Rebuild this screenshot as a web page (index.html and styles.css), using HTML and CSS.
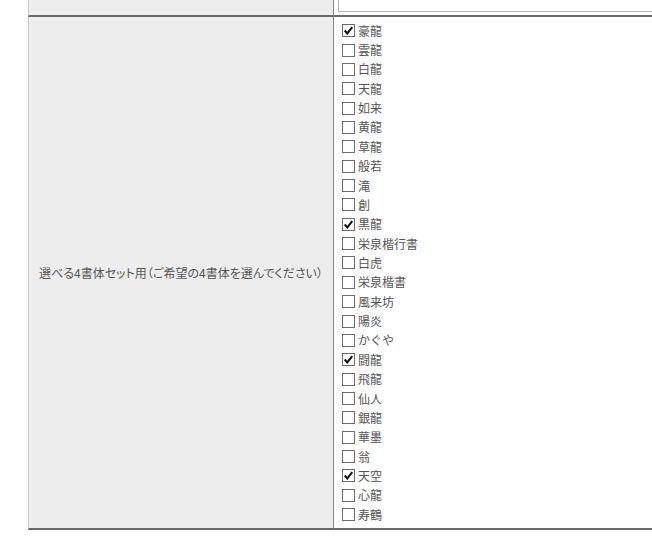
FILE: index.html
```html
<!DOCTYPE html>
<html lang="ja">
<head>
<meta charset="utf-8">
<title>書体選択</title>
<link rel="stylesheet" href="styles.css">
</head>
<body>
<div class="wrap">
<table class="form-table">
  <tr class="row-top">
    <th class="label-cell"></th>
    <td class="value-cell"><div class="text-input"></div></td>
  </tr>
  <tr>
    <th class="label-cell"><span class="label-text">選べる4書体セット用（ご希望の4書体を選んでください）</span></th>
    <td class="value-cell list-cell">
      <ul class="check-list">
        <li class="check-item"><span class="box on"><svg viewBox="0 0 13 13"><path d="M2 6.5 L5 10 L11 2.5" fill="none" stroke="#111" stroke-width="2.4"/></svg></span><span class="name">豪龍</span></li>
        <li class="check-item"><span class="box"></span><span class="name">雲龍</span></li>
        <li class="check-item"><span class="box"></span><span class="name">白龍</span></li>
        <li class="check-item"><span class="box"></span><span class="name">天龍</span></li>
        <li class="check-item"><span class="box"></span><span class="name">如来</span></li>
        <li class="check-item"><span class="box"></span><span class="name">黄龍</span></li>
        <li class="check-item"><span class="box"></span><span class="name">草龍</span></li>
        <li class="check-item"><span class="box"></span><span class="name">般若</span></li>
        <li class="check-item"><span class="box"></span><span class="name">滝</span></li>
        <li class="check-item"><span class="box"></span><span class="name">創</span></li>
        <li class="check-item"><span class="box on"><svg viewBox="0 0 13 13"><path d="M2 6.5 L5 10 L11 2.5" fill="none" stroke="#111" stroke-width="2.4"/></svg></span><span class="name">黒龍</span></li>
        <li class="check-item"><span class="box"></span><span class="name">栄泉楷行書</span></li>
        <li class="check-item"><span class="box"></span><span class="name">白虎</span></li>
        <li class="check-item"><span class="box"></span><span class="name">栄泉楷書</span></li>
        <li class="check-item"><span class="box"></span><span class="name">風来坊</span></li>
        <li class="check-item"><span class="box"></span><span class="name">陽炎</span></li>
        <li class="check-item"><span class="box"></span><span class="name">かぐや</span></li>
        <li class="check-item"><span class="box on"><svg viewBox="0 0 13 13"><path d="M2 6.5 L5 10 L11 2.5" fill="none" stroke="#111" stroke-width="2.4"/></svg></span><span class="name">闘龍</span></li>
        <li class="check-item"><span class="box"></span><span class="name">飛龍</span></li>
        <li class="check-item"><span class="box"></span><span class="name">仙人</span></li>
        <li class="check-item"><span class="box"></span><span class="name">銀龍</span></li>
        <li class="check-item"><span class="box"></span><span class="name">華墨</span></li>
        <li class="check-item"><span class="box"></span><span class="name">翁</span></li>
        <li class="check-item"><span class="box on"><svg viewBox="0 0 13 13"><path d="M2 6.5 L5 10 L11 2.5" fill="none" stroke="#111" stroke-width="2.4"/></svg></span><span class="name">天空</span></li>
        <li class="check-item"><span class="box"></span><span class="name">心龍</span></li>
        <li class="check-item"><span class="box"></span><span class="name">寿鶴</span></li>
      </ul>
    </td>
  </tr>
</table>
</div>
</body>
</html>
```

FILE: styles.css
```css
html, body {
  margin: 0;
  padding: 0;
  background: #ffffff;
  overflow: hidden;
}

.wrap {
  margin-top: -24px;
  padding-left: 28px;
}

.form-table {
  border-collapse: separate;
  border-spacing: 0;
  width: 624px;
  font-family: "Noto Sans CJK JP", "Noto Sans", sans-serif;
  color: #555555;
  font-size: 12px;
}

.label-cell {
  width: 304px;
  background: #ededed;
  border-left: 1px solid #c8c8c8;
  border-bottom: 2px solid #6a6a6a;
  font-weight: normal;
  text-align: center;
  vertical-align: middle;
  padding: 0;
}

.label-text {
  font-size: 12px;
  font-feature-settings: "palt";
  color: #555555;
}

.value-cell {
  border-left: 1px solid #858585;
  border-bottom: 2px solid #6a6a6a;
  padding: 3px 0 3px 4px;
  vertical-align: top;
}

.text-input {
  height: 31px;
  border: 1px solid #b4b4b4;
  border-right: none;
  background: #fff;
}

.list-cell {
  padding: 4px 0 4px 4px;
}

.check-list {
  list-style: none;
  margin: 0;
  padding: 0;
}

.check-item {
  display: flex;
  align-items: center;
  height: 19.36px;
}

.box {
  width: 11px;
  height: 11px;
  border: 1px solid #6e6e6e;
  background: #fff;
  margin-left: 4px;
  margin-right: 3px;
  display: flex;
  align-items: center;
  justify-content: center;
  flex: none;
}

.box svg {
  width: 11px;
  height: 11px;
  display: block;
}

.name {
  font-size: 12px;
  line-height: 14px;
  color: #555555;
}
```
